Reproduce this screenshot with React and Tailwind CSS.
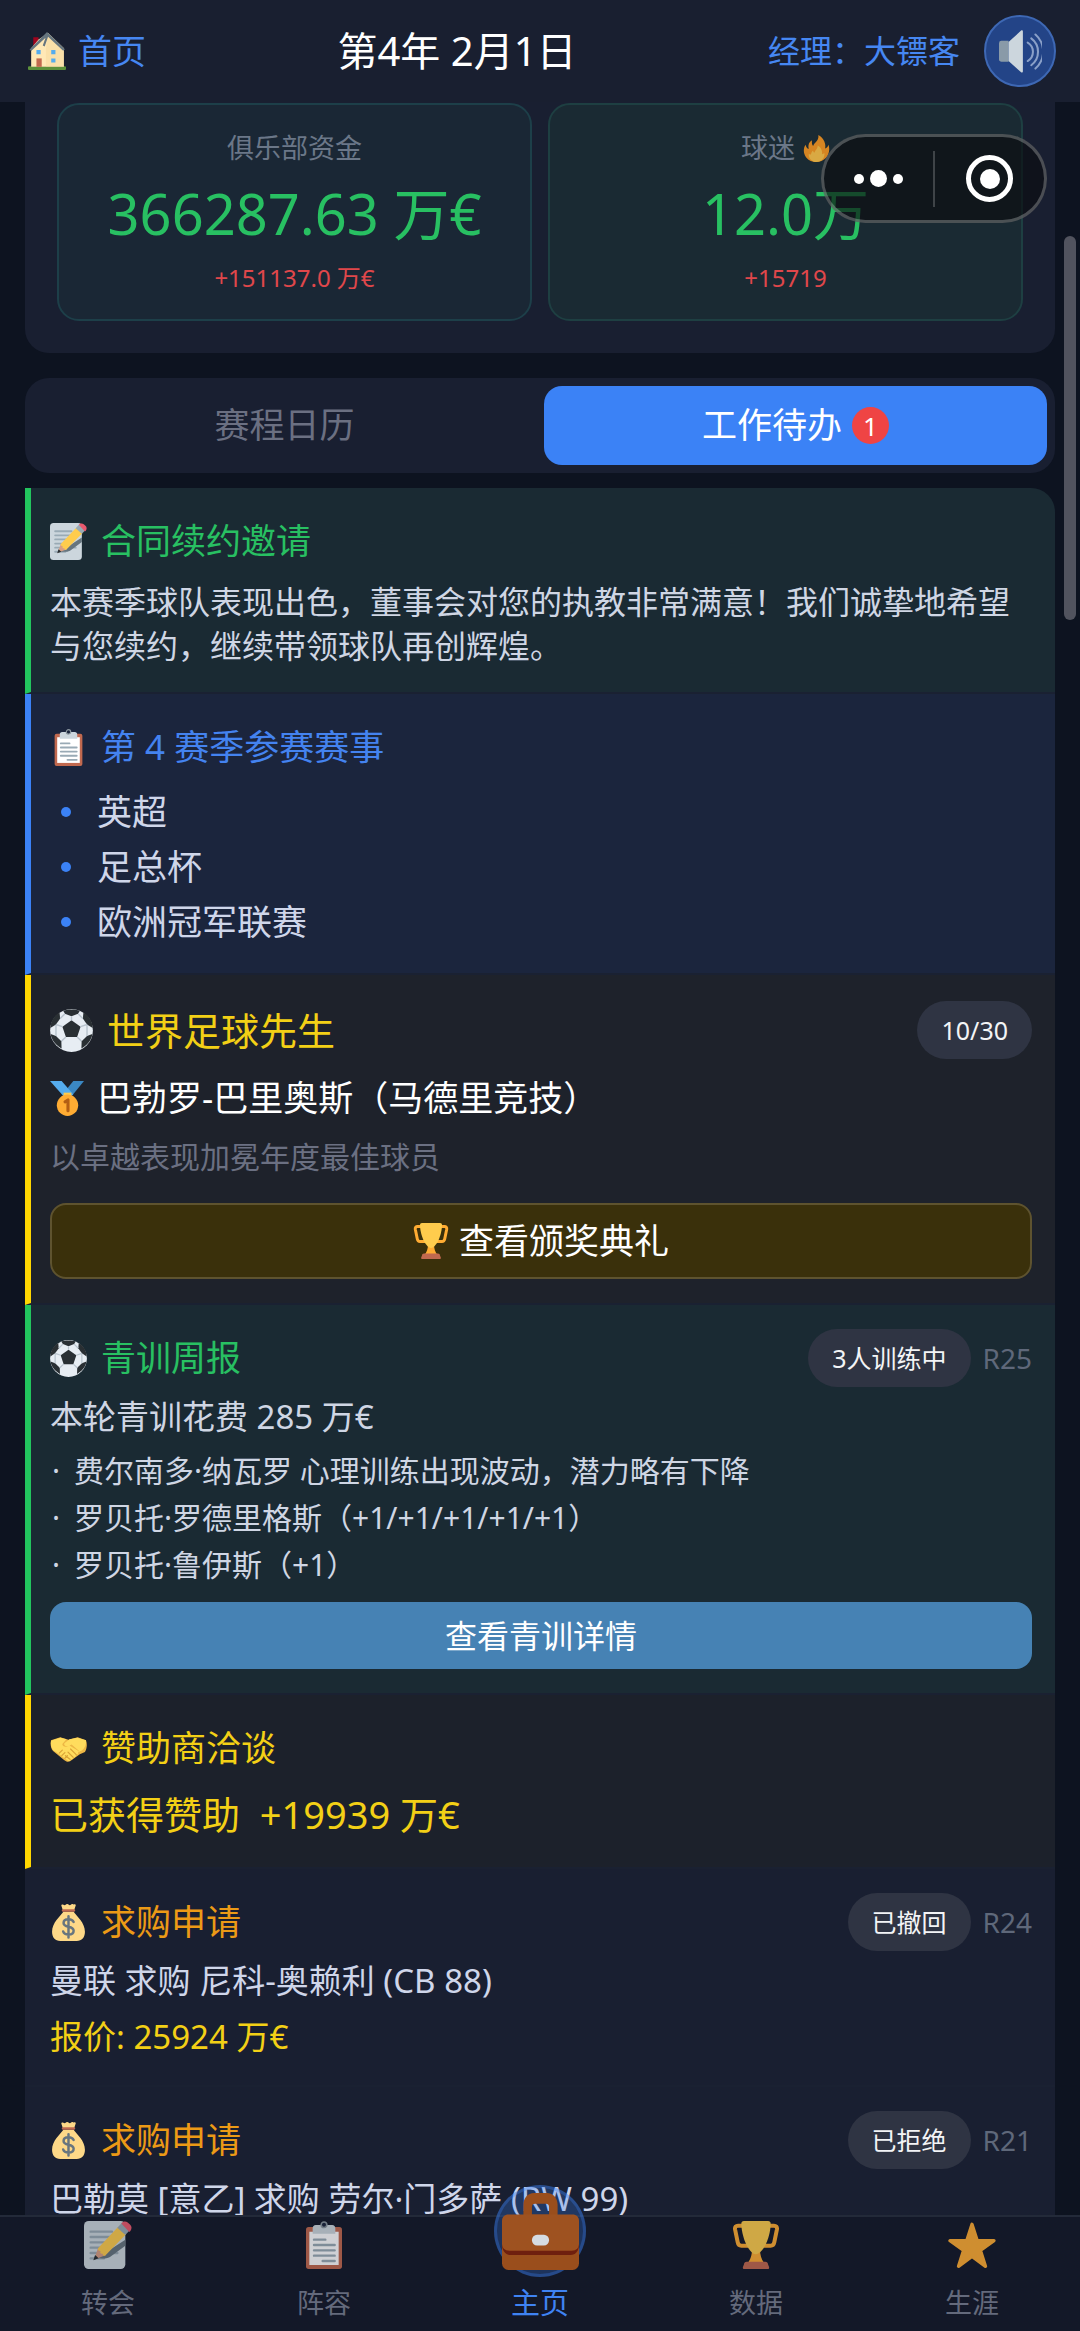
import React, { useState } from 'react';
import clsx from 'clsx';

/* ---------- Icons ---------- */

const HouseIcon = ({ className }) => (
  <svg viewBox="0 0 36 36" className={className} aria-hidden="true">
    <path fill="#5C913B" d="M35 36H1a1 1 0 0 1-1-1v-1.500a1 1 0 0 1 1-1h34a1 1 0 0 1 1 1V35a1 1 0 0 1-1 1z" />
    <path fill="#A0041E" d="M5 5h5v11H5z" />
    <path fill="#FFE8B6" d="M3 33V15.500L10 7l9-6 15 14.500V33z" />
    <path fill="#F4D79A" d="M17 15.500L19 1l15 14.500V33H17z" opacity=".45" />
    <path fill="#66757F" d="M1.500 16.500L18 0l17 16.300-1.700 1.500L19 4.500l-3.200 9.200-1.800-.8 2.600-7.400L3 18z" />
    <path fill="#55ACEE" d="M8 17h4v4H8zM22 17h4v4h-4zM22 25h4v4h-4z" />
    <path fill="#C1694F" d="M8 25h5v8H8z" />
  </svg>
);

const SpeakerIcon = ({ className }) => (
  <svg viewBox="0 0 36 36" className={className} aria-hidden="true">
    <path fill="#899AA8" d="M8 9H2a2 2 0 0 0-2 2v14c0 1 1 1.500 2 1.500h6z" />
    <path fill="#CCD6DD" d="M18.500.5L8 10v16l10.500 9.300c.8.600 1.500 0 1.500-.8V1.300c0-.8-.7-1.300-1.500-.8z" />
    <g fill="none" stroke="#8AA0C8" strokeWidth="1.700" strokeLinecap="round">
      <path d="M24 10.500a9 9 0 0 1 0 15.500" />
      <path d="M27 7a14 14 0 0 1 0 22.500" />
      <path d="M30.500 3.800a19 19 0 0 1 0 28.500" />
    </g>
  </svg>
);

const FireIcon = ({ className }) => (
  <svg viewBox="0 0 36 36" className={className} aria-hidden="true">
    <path
      fill="#D68522"
      d="M35 19c0-2-.3-4-1-6-1 3-2.500 4.500-4.500 5C31 12.500 28 4 20.500 0c.3 4.500-.5 6.500-3.500 9.500-1.500 1.500-3 3-3.500 5C12 13 11.500 10.500 12 7 8 9 6.500 13 7.500 18.500 5.500 18 4 16 3.500 13 .5 17 0 24 4 29.500 7.500 34 12.500 36 18 36c9.500 0 17-7.500 17-17z"
    />
    <path
      fill="#D9A943"
      d="M28.500 24c-1 1-2 1.500-3 1.500.5-4-1.500-9.500-6-11.500.3 4-3 6-4.300 9.500-1-.5-1.700-1.800-1.700-3-3.500 2.500-2 5.500-3.500 5.500-1 0-1.700-.7-2.200-1.500C6.500 30.500 12 36 18 36s11.500-5 10.500-12z"
    />
  </svg>
);

const MemoIcon = ({ className }) => (
  <svg viewBox="0 0 36 36" className={className} aria-hidden="true">
    <rect width="31" height="36" fill="#CCD6DD" rx="3.500" />
    <path
      stroke="#99AAB5"
      strokeWidth="1.800"
      strokeLinecap="round"
      d="M5 8h16M5 12h16M5 16h12M5 20h10M5 24h20M5 28h10"
    />
    <path fill="#66757F" d="M31 14v4.500L19.500 27c-3 1.500-6 1-10 1z" />
    <path fill="#D99E82" d="M7.500 29l3-8.500 6 5z" />
    <path fill="#292F33" d="M7 29.500l1.300-4 2.700 2.500z" />
    <path fill="#FFCC4D" d="M10.500 20.500L25.500 4.500l6 5.500-15.500 15.800c-1 .8-2-.2-2-1.300-1.500.3-2.300-.7-1.500-2-1.400.2-2.400-.8-2-2z" />
    <path fill="#99AAB5" d="M25 5l3.300-3.500 6 5.500-3.300 3.500z" />
    <path fill="#EA596E" d="M28 1.800C29.200.3 31.300 0 32.800 1.200l1.700 1.500c1.500 1.300 1.500 3.300.3 4.800l-.8.800z" />
  </svg>
);

const ClipboardIcon = ({ className }) => (
  <svg viewBox="0 0 36 36" className={className} aria-hidden="true">
    <rect x="4.500" y="4.500" width="27" height="31.500" rx="2" fill="#C1694F" />
    <path fill="#FFF" d="M7 8h22v25H7z" />
    <path fill="#CCD6DD" d="M9.500 9.500V5.500c0-1.300.9-2.500 2.300-2.500h3.700a2.600 2.600 0 0 1 5 0h3.700c1.400 0 2.300 1.200 2.300 2.500v4z" />
    <circle cx="18" cy="2.800" r="2.100" fill="#1b253d" stroke="#8a969e" strokeWidth="1.200" />
    <path
      stroke="#99AAB5"
      strokeWidth="1.800"
      strokeLinecap="round"
      d="M10.500 14h8.500M10.500 18h15.500M10.500 22h15.500M10.500 26h15.500M17 30h9"
    />
  </svg>
);

const BallIcon = ({ className }) => (
  <svg viewBox="0 0 36 36" className={className} aria-hidden="true">
    <circle cx="18" cy="18" r="17.900" fill="#E7EDF3" />
    <g fill="#292F33">
      <path d="M18 9.500l7.600 5.300-2.900 8.700h-9.400l-2.900-8.700z" />
      <path d="M11 1.500C15 .1 21 .1 25 1.500L23.500 4 18 6l-5.500-2z" />
      <path d="M.6 13C1.600 8.500 4.500 5 8 3L8.500 8 5 13 .3 16z" />
      <path d="M35.400 13C34.400 8.500 31.500 5 28 3L27.500 8 31 13l4.700 3z" />
      <path d="M.5 21L5 22.500l4.500 4.500.2 6C5 30.500 1.500 26.500.5 21z" />
      <path d="M35.500 21L31 22.500 26.500 27l-.2 6C31 30.500 34.500 26.500 35.500 21z" />
    </g>
    <path
      stroke="#B9C4CE"
      strokeWidth="1.200"
      fill="none"
      d="M18 6v3.500M10.400 14.800L5 13M25.600 14.800L31 13M13.300 23.500L9.500 27M22.700 23.500l3.800 3.500M12.500 4l-4 4M23.500 4l4 4M5 13v9.500M31 13v9.500"
    />
  </svg>
);

const MedalIcon = ({ className }) => (
  <svg viewBox="0 0 36 36" className={className} aria-hidden="true">
    <path fill="#3B88C3" d="M24 0h11L22 16l-7-5z" />
    <path fill="#55ACEE" d="M0 0h12l12 14-8 4z" />
    <path fill="#FFCC4D" d="M14 12h8v5h-8z" />
    <circle cx="18" cy="25" r="11" fill="#FFAC33" />
    <path
      fill="none"
      stroke="#B35F14"
      strokeWidth="3.200"
      strokeLinejoin="round"
      strokeLinecap="round"
      d="M15.500 21.500l3-2v11"
    />
  </svg>
);

const TrophyIcon = ({ className }) => (
  <svg viewBox="0 0 36 36" className={className} aria-hidden="true">
    <path
      fill="none"
      stroke="#FFAC33"
      strokeWidth="3"
      strokeLinejoin="round"
      d="M9 3.500H4.500C3 3.500 2 4.500 2.300 6.300l2 9.700c.3 1.600 1.300 2.500 2.700 2.500h5M27 3.500h4.500c1.500 0 2.500 1 2.200 2.800l-2 9.700c-.3 1.600-1.300 2.500-2.700 2.500h-5"
    />
    <path fill="#FFAC33" d="M15 21h6c0 5 1.200 8 3.500 11h-13C13.800 29 15 26 15 21z" />
    <path fill="#FFCC4D" d="M9 0h18c1.400 0 2 .8 2 2 0 8-4.500 22-11 23C11.500 24 7 10 7 2c0-1.200.6-2 2-2z" />
    <path fill="#C1694F" d="M11 30.500h14c1.200 0 2 .8 2 2l.8 2c.2.9-.1 1.500-1 1.500H9.200c-.9 0-1.200-.6-1-1.500l.8-2c0-1.200.8-2 2-2z" />
  </svg>
);

const HandshakeIcon = ({ className }) => (
  <svg viewBox="0 0 36 36" className={className} aria-hidden="true">
    <path fill="#EDB745" d="M1 10l9-3 8 2.500L27 7l8 3c1.500 4 .8 8-1 11.500l-5 2-9.500 7c-2 1-4 .3-5.500-1L3 20.500C.5 17.500.3 13.500 1 10z" />
    <path
      fill="#FFDC5D"
      d="M1 10.500C.5 14 1 17.500 3.500 20l4 2.500 10 7.500c1.500.8 2.700-.3 2.300-1.500 1.500.8 3.200-.5 2.700-2 1.700.6 3.200-.8 2.500-2.500 1.800.4 3-1 2.300-2.500L31 20c3-2.500 4.500-6 4-10l-8.500-2.500L19 9l-5 4c-1 2 2 3.500 4 2.500l3-1.500 9 8-11-7c-3 2-7 1.500-7-1.500L16 9l-6-1.500z"
    />
    <path
      stroke="#D9A235"
      strokeWidth="1.100"
      strokeLinecap="round"
      fill="none"
      d="M15 25l4.500 3.500M17.500 21.500l5 5M20 18.500l5.500 5.500M9 22.500l3-3M11.500 25l3-3M14.500 27.500l2.500-2.500"
    />
  </svg>
);

const MoneyBagIcon = ({ className }) => (
  <svg viewBox="0 0 36 36" className={className} aria-hidden="true">
    <path fill="#FDD888" d="M12.500 6L11 1.500c0-1 1-1.500 2-.8 1 .6 1.700.6 2.500-.2.8-.7 1.600-.7 2.500 0 .9.8 1.700.8 2.500 0 .8-.7 1.600-.7 2.500 0 1.500-.8 2.300 0 2 1L23.500 6z" />
    <path
      fill="#FDD888"
      d="M13 7.500h10c3 4.500 11 10.500 11 19.500 0 5.500-3 9-8 9H10c-5 0-8-3.500-8-9 0-9 8-15 11-19.500z"
    />
    <rect x="11.500" y="5" width="13" height="2.600" rx="1.300" fill="#BF6952" />
    <path
      fill="none"
      stroke="#67757F"
      strokeWidth="2.400"
      strokeLinecap="round"
      d="M23 17.500c-.8-1.900-2.700-2.700-5-2.700-2.800 0-4.800 1.400-4.800 3.600 0 2.400 2 3.100 4.800 3.700s5 1.400 5 3.900c0 2.300-2.100 3.700-5 3.700-2.600 0-4.600-1-5.200-3M18 12v20.500"
    />
  </svg>
);

const BriefcaseIcon = ({ className }) => (
  <svg viewBox="0 0 36 36" className={className} aria-hidden="true">
    <path
      fill="#9A4E1C"
      fillRule="evenodd"
      d="M10 11V5.500C10 2.500 12 0 15 0h6c3 0 5 2.500 5 5.500V11zM14 10h8V6.500C22 5.500 21.500 5 20.500 5h-5c-1 0-1.500.5-1.500 1.500z"
    />
    <rect y="12" width="36" height="24" rx="3" fill="#9A4E1C" />
    <path fill="#6F1F0E" d="M0 24c0 3 1.500 5 4 5h28c2.500 0 4-2 4-5z" />
    <path fill="#9E5220" d="M3 10h30c1.800 0 3 1.200 3 3v10.500c0 2.200-1.200 3.500-3.500 3.500h-29C1.200 27 0 25.700 0 23.500V13c0-1.800 1.200-3 3-3z" />
    <rect x="14" y="19.500" width="8" height="5" rx="2.400" fill="#D5DCE2" />
  </svg>
);

const StarIcon = ({ className }) => (
  <svg viewBox="0 0 36 36" className={className} aria-hidden="true">
    <path
      fill="#FFAC33"
      stroke="#FFAC33"
      strokeWidth="2.500"
      strokeLinejoin="round"
      d="M18 2.500l3.900 12.200h12.600L24.300 22l3.800 12L18 26.600 7.900 34l3.800-12L1.500 14.700h12.600z"
    />
  </svg>
);

/* ---------- Shared pieces ---------- */

const tones = {
  green: 'border-l-[6px] border-l-[#22c55e] bg-[#1a2a33] pt-6 pb-6 pl-[19px]',
  blue: 'border-l-[6px] border-l-[#3b82f6] bg-[#1b253d] pt-6 pb-6 pl-[19px]',
  award: 'border-l-[6px] border-l-[#ffd700] bg-[#1e222b] pt-[26px] pb-6 pl-[19px]',
  sponsor: 'border-l-[6px] border-l-[#ffd700] bg-[#1c212b] pt-6 pb-[26px] pl-[19px]',
  plain: 'bg-[#191f31] pt-6 pb-[26px] pl-[25px]',
};

const Item = ({ tone, className, children }) => (
  <li className={clsx('border-b-2 border-b-[#1a2132] pr-[23px]', tones[tone], className)}>
    {children}
  </li>
);

const ItemHeader = ({ icon: Icon, title, titleColor, badge, round, large }) => (
  <div className="flex h-[58px] items-center justify-between">
    <h2
      className={clsx(
        'flex items-center gap-3.5',
        titleColor,
        large ? 'text-[38px] leading-[50px]' : 'text-[35px] leading-[50px]'
      )}
    >
      <Icon className={large ? 'size-[43px]' : 'size-[37px]'} />
      {title}
    </h2>
    <div className="flex items-center gap-3">
      {badge && (
        <span className="rounded-full bg-[#2f3443] px-6 text-[25px] leading-[58px] text-[#f3f4f6]">
          {badge}
        </span>
      )}
      {round && <span className="text-[28px] leading-[44px] text-[#5f687a]">{round}</span>}
    </div>
  </div>
);

const StatCard = ({ label, icon, value, change, className }) => (
  <div
    className={clsx(
      'flex flex-1 flex-col items-center rounded-[22px] border-2 pt-6 pb-[22px]',
      className
    )}
  >
    <p className="flex items-center gap-2 text-[27px] leading-[38px] text-[#6b7788]">
      {label}
      {icon}
    </p>
    <p className="mt-3 text-[56px] leading-[68px] text-[#28c062]">{value}</p>
    <p className="mt-3 text-[24px] leading-[38px] text-[#e0474b]">{change}</p>
  </div>
);

/* ---------- Data ---------- */

const competitions = ['英超', '足总杯', '欧洲冠军联赛'];

const youthNotes = [
  '费尔南多·纳瓦罗 心理训练出现波动，潜力略有下降',
  '罗贝托·罗德里格斯（+1/+1/+1/+1/+1）',
  '罗贝托·鲁伊斯（+1）',
];

const navItems = [
  { id: 'transfer', label: '转会', icon: MemoIcon },
  { id: 'squad', label: '阵容', icon: ClipboardIcon },
  { id: 'home', label: '主页', icon: BriefcaseIcon },
  { id: 'stats', label: '数据', icon: TrophyIcon },
  { id: 'career', label: '生涯', icon: StarIcon },
];

/* ---------- Page sections ---------- */

const Header = () => (
  <header className="flex h-[102px] shrink-0 items-center justify-between bg-[#191f30] pr-6 pl-7">
    <a href="#home" className="flex items-center gap-3 text-[34px] text-[#4687f2]">
      <HouseIcon className="size-[38px]" />
      首页
    </a>
    <h1 className="text-[40px] text-white">第4年 2月1日</h1>
    <div className="flex items-center gap-6">
      <span className="text-[32px] text-[#4687f2]">经理：大镖客</span>
      <button
        type="button"
        aria-label="声音"
        className="flex size-[72px] items-center justify-center rounded-full border-2 border-[#3e68b4] bg-[#234487]"
      >
        <SpeakerIcon className="size-[43px]" />
      </button>
    </div>
  </header>
);

const Tabs = () => {
  const [active, setActive] = useState('todo');
  const tabClass = (id) =>
    clsx(
      'flex h-[79px] flex-1 items-center justify-center gap-2.5 rounded-[18px] text-[35px]',
      active === id ? 'bg-[#3b82f6] text-white' : 'text-[#6b7082]'
    );

  return (
    <div role="tablist" className="mt-[25px] flex gap-2 rounded-3xl bg-[#191f31] p-2">
      <button
        type="button"
        role="tab"
        aria-selected={active === 'calendar'}
        className={tabClass('calendar')}
        onClick={() => setActive('calendar')}
      >
        赛程日历
      </button>
      <button
        type="button"
        role="tab"
        aria-selected={active === 'todo'}
        className={tabClass('todo')}
        onClick={() => setActive('todo')}
      >
        工作待办
        <span className="flex size-[37px] items-center justify-center rounded-full bg-[#ef4444] text-[26px] leading-none">
          1
        </span>
      </button>
    </div>
  );
};

// System menu that floats over the page content
const Capsule = () => (
  <div className="absolute top-[134px] right-[33px] z-20 flex h-[89px] w-[226px] items-center rounded-full border-[3px] border-white/25 bg-[#0b0d10]/65">
    <button type="button" aria-label="更多" className="flex h-full flex-1 items-center justify-center gap-1.5">
      <span className="size-2.5 rounded-full bg-white" />
      <span className="size-[17px] rounded-full bg-white" />
      <span className="size-2.5 rounded-full bg-white" />
    </button>
    <span className="h-14 w-0.5 bg-white/20" />
    <button type="button" aria-label="关闭" className="flex h-full flex-1 items-center justify-center">
      <span className="flex size-[47px] items-center justify-center rounded-full border-[5px] border-white">
        <span className="size-5 rounded-full bg-white" />
      </span>
    </button>
  </div>
);

const BottomNav = () => (
  <nav className="relative z-10 flex shrink-0 border-t-2 border-[#232a39] bg-[#131828] pt-1 pb-3">
    {navItems.map(({ id, label, icon: Icon }) =>
      id === 'home' ? (
        <a key={id} href="#home" aria-current="page" className="flex flex-1 flex-col items-center">
          <span className="-mt-9 flex size-[92px] items-center justify-center rounded-full border-[3px] border-[#3b82f6]/30 bg-[#3b82f6]/25">
            <BriefcaseIcon className="size-[77px] shrink-0" />
          </span>
          <span className="mt-2.5 text-[29px] leading-8 text-[#3f83f3]">{label}</span>
        </a>
      ) : (
        <a key={id} href={`#${id}`} className="flex flex-1 flex-col items-center">
          <Icon className="size-12 opacity-80" />
          <span className="mt-[18px] text-[27px] leading-8 text-[#646a7c]">{label}</span>
        </a>
      )
    )}
  </nav>
);

export default function App() {
  return (
    <div
      lang="zh-CN"
      className="relative flex h-screen flex-col overflow-hidden bg-[#0d1320] font-['Noto_Sans','Noto_Sans_CJK_SC',sans-serif]"
    >
      <Header />
      <Capsule />

      <main className="min-h-0 flex-1 overflow-hidden px-[25px]">
        <section className="flex gap-4 rounded-b-3xl bg-[#191f31] px-8 pt-px pb-8">
          <StatCard
            label="俱乐部资金"
            value="366287.63 万€"
            change="+151137.0 万€"
            className="border-[#1d3f49] bg-[#1a2735]"
          />
          <StatCard
            label="球迷"
            icon={<FireIcon className="size-[27px]" />}
            value="12.0万"
            change="+15719"
            className="border-[#1e3f42] bg-[#1a2a33]"
          />
        </section>

        <Tabs />

        <ul className="mt-[15px]">
          <Item tone="green" className="rounded-tr-3xl">
            <ItemHeader icon={MemoIcon} title="合同续约邀请" titleColor="text-[#28c062]" />
            <p className="mt-2.5 text-[32px] leading-[44px] text-[#cfd6e4]">
              本赛季球队表现出色，董事会对您的执教非常满意！我们诚挚地希望与您续约，继续带领球队再创辉煌。
            </p>
          </Item>

          <Item tone="blue">
            <ItemHeader icon={ClipboardIcon} title="第 4 赛季参赛赛事" titleColor="text-[#4483f0]" />
            <ul className="mt-2">
              {competitions.map((name) => (
                <li
                  key={name}
                  className="flex items-center gap-[26px] pl-[11px] text-[35px] leading-[55px] text-[#cfd6ea]"
                >
                  <span className="size-2.5 rounded-full bg-[#3b82f6]" />
                  {name}
                </li>
              ))}
            </ul>
          </Item>

          <Item tone="award">
            <ItemHeader
              icon={BallIcon}
              title="世界足球先生"
              titleColor="text-[#f3d016]"
              badge="10/30"
              large
            />
            <p className="mt-3.5 flex items-center gap-3 text-[35px] leading-[50px] text-white">
              <MedalIcon className="size-[35px]" />
              巴勃罗-巴里奥斯（马德里竞技）
            </p>
            <p className="mt-3 text-[30px] leading-[44px] text-[#6b7082]">以卓越表现加冕年度最佳球员</p>
            <button
              type="button"
              className="mt-6 flex h-[76px] w-full items-center justify-center gap-2.5 rounded-2xl border-2 border-[#5e532f] bg-[#3a300b] text-[35px] text-white"
            >
              <TrophyIcon className="size-[36px]" />
              查看颁奖典礼
            </button>
          </Item>

          <Item tone="green">
            <ItemHeader
              icon={BallIcon}
              title="青训周报"
              titleColor="text-[#28c062]"
              badge="3人训练中"
              round="R25"
            />
            <p className="mt-2 text-[33px] leading-[44px] text-[#cfd6e4]">本轮青训花费 285 万€</p>
            <ul className="mt-2">
              {youthNotes.map((note) => (
                <li key={note} className="flex text-[30px] leading-[47px] text-[#cfd6e4]">
                  <span className="w-6 pl-0.5">·</span>
                  {note}
                </li>
              ))}
            </ul>
            <button
              type="button"
              className="mt-3.5 h-[67px] w-full rounded-2xl bg-[#4682b4] text-[32px] text-white"
            >
              查看青训详情
            </button>
          </Item>

          <Item tone="sponsor">
            <ItemHeader icon={HandshakeIcon} title="赞助商洽谈" titleColor="text-[#f3d016]" />
            <p className="mt-2.5 text-[38px] leading-[54px] whitespace-pre text-[#f3d016]">
              {'已获得赞助  +19939 万€'}
            </p>
          </Item>

          <Item tone="plain">
            <ItemHeader
              icon={MoneyBagIcon}
              title="求购申请"
              titleColor="text-[#ec9a16]"
              badge="已撤回"
              round="R24"
            />
            <p className="mt-2 text-[33px] leading-[44px] text-[#cfd6ea]">曼联 求购 尼科-奥赖利 (CB 88)</p>
            <p className="mt-3 text-[33px] leading-[44px] text-[#f3d016]">报价: 25924 万€</p>
          </Item>

          <Item tone="plain">
            <ItemHeader
              icon={MoneyBagIcon}
              title="求购申请"
              titleColor="text-[#ec9a16]"
              badge="已拒绝"
              round="R21"
            />
            <p className="mt-2 text-[33px] leading-[44px] text-[#cfd6ea]">
              巴勒莫 [意乙] 求购 劳尔·门多萨 (RW 99)
            </p>
          </Item>
        </ul>
      </main>

      {/* Scroll thumb */}
      <div className="absolute top-[236px] right-1 h-[384px] w-3 rounded-full bg-[#51535e]" />

      <BottomNav />
    </div>
  );
}
